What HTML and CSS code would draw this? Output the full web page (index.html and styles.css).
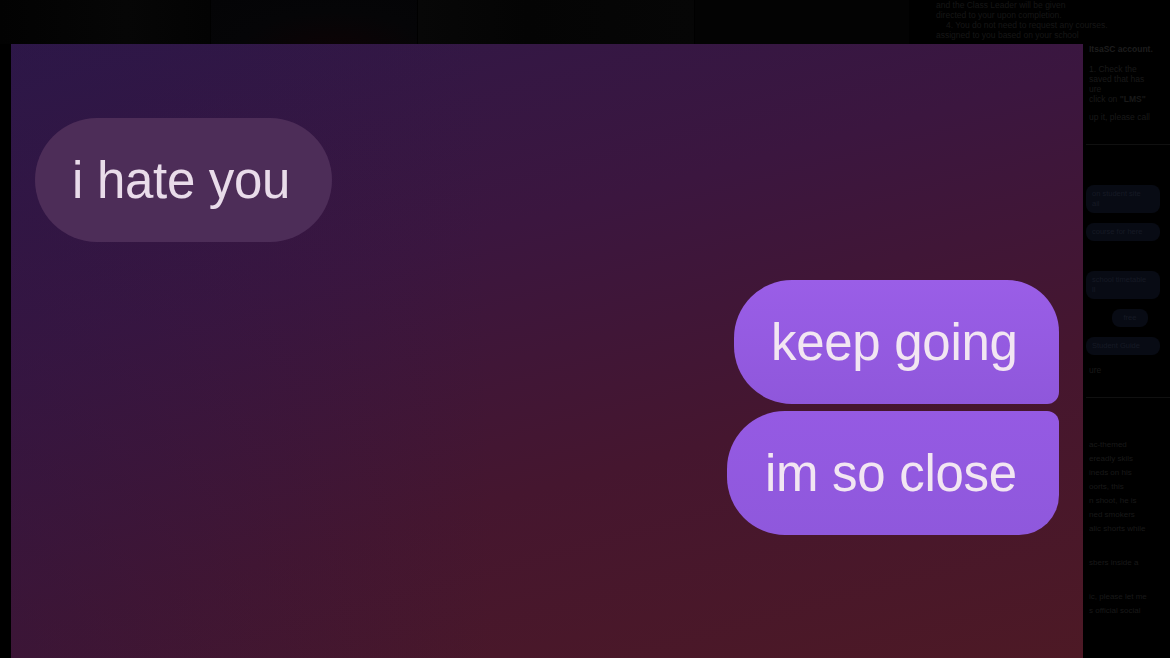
FILE: index.html
```html
<!DOCTYPE html>
<html lang="en">
<head>
<meta charset="utf-8">
<title>Chat screenshot</title>
<link rel="stylesheet" href="styles.css">
</head>
<body>
<div class="page">
  <div class="thumbs">
    <div class="thumb t1"></div>
    <div class="thumb t2"></div>
    <div class="thumb t3"></div>
    <div class="thumb t4"></div>
    <div class="top-text">
      <p>and the Class Leader will be given</p>
      <p>directed to your upon completion.</p>
      <p class="indent">4. You do not need to request any courses.</p>
      <p>assigned to you based on your school</p>
    </div>
  </div>
  <aside class="side">
    <p class="b">ItsaSC account.</p>
    <p>1. Check the</p>
    <p>saved that has</p>
    <p>ure</p>
    <p>click on <b>"LMS"</b></p>
    <p class="gap">up it, please call</p>
    <hr>
    <div class="pill wide">on student site<br>ail</div>
    <div class="pill">course for here</div>
    <div class="pill wide tall">school timetable<br>ll</div>
    <div class="pill small">free</div>
    <div class="pill">Student Guide</div>
    <p>ure</p>
    <hr>
    <p class="para">ac-themed<br>ereadly skils<br>ineds on his<br>oorts, this<br>n shoot, he is<br>ned smokers<br>alic shorts while</p>
    <p class="para">sbers inside a</p>
    <p class="para">ic, please let me<br>s official social</p>
  </aside>
</div>

<div class="lightbox">
  <div class="chat">
    <div class="row left">
      <div class="bubble in">i hate you</div>
    </div>
    <div class="row right first">
      <div class="bubble out top">keep going</div>
    </div>
    <div class="row right">
      <div class="bubble out bottom">im so close</div>
    </div>
  </div>
</div>
</body>
</html>
```
FILE: styles.css
```css
html, body {
  margin: 0;
  padding: 0;
  background: #000;
  width: 1170px;
  height: 658px;
  overflow: hidden;
  font-family: "Liberation Sans", Arial, sans-serif;
}

.page {
  position: relative;
  width: 1170px;
  height: 658px;
}

.thumbs {
  display: flex;
  height: 44px;
}
.thumb {
  height: 44px;
  margin-right: 1px;
}
.t1 { background: linear-gradient(90deg, #020202, #060606 60%, #030303); width: 210px; }
.t2 { background: radial-gradient(ellipse at 60% 120%, #0d0305 0%, #050507 55%, #040406 100%); width: 206px; }
.t3 { background: linear-gradient(90deg, #070707, #040404 40%, #060606); width: 276px; }
.t4 { background: #030303; width: 214px; }

.top-text {
  flex: 1;
  padding: 0 0 0 26px;
  font-size: 8.5px;
  line-height: 10px;
  color: #161616;
  white-space: nowrap;
  overflow: hidden;
}
.top-text p { margin: 0; }
.top-text .indent { padding-left: 10px; }

.side {
  position: absolute;
  left: 1086px;
  top: 44px;
  width: 84px;
  font-size: 8.5px;
  line-height: 10px;
  color: #191919;
  white-space: nowrap;
  overflow: hidden;
}
.side p { margin: 0 0 0 3px; }
.side .b { font-weight: bold; margin-bottom: 10px; color: #1d1d1d; }
.side .gap { margin-top: 8px; }
.side hr { border: 0; border-top: 1px solid #101010; margin: 22px 0 40px; }
.pill {
  background: #080b14;
  color: #161a24;
  border-radius: 8px;
  padding: 4px 6px;
  margin: 0 10px 10px 0;
  font-size: 7.5px;
  line-height: 10px;
}
.pill.tall { margin-top: 30px; }
.pill.small { margin-left: 26px; width: 24px; text-align: center; }
.side .para { margin-top: 20px; font-size: 8px; line-height: 14px; }

.lightbox {
  position: absolute;
  left: 11px;
  top: 44px;
  width: 1072px;
  height: 614px;
  overflow: hidden;
  background:
    linear-gradient(90deg, rgba(40, 20, 70, 0.35) 0%, rgba(40, 20, 70, 0) 45%),
    linear-gradient(165deg, #2f1848 0%, #3b163f 35%, #45162f 65%, #4d1925 100%);
}

.chat {
  display: flex;
  flex-direction: column;
  padding: 74px 24px 0 24px;
}
.row { display: flex; }
.row.right { justify-content: flex-end; }
.row.first { margin-top: 38px; margin-bottom: 7px; }

.bubble {
  height: 124px;
  box-sizing: border-box;
  display: flex;
  align-items: center;
  font-size: 51px;
  letter-spacing: -0.3px;
  color: #f2e6f2;
}
.bubble.in {
  width: 297px;
  padding-left: 37px;
  border-radius: 62px;
  background: #4d2d58;
  color: #e9dcea;
}
.bubble.out {
  background: #9459e0;
  padding-left: 37px;
}
.bubble.top {
  width: 325px;
  border-radius: 58px 52px 12px 58px;
  background: linear-gradient(180deg, #9a5ee7, #8f57db);
}
.bubble.bottom {
  width: 332px;
  padding-left: 38px;
  border-radius: 58px 12px 40px 58px;
  background: linear-gradient(180deg, #955ae3, #8f58dc);
}
```
